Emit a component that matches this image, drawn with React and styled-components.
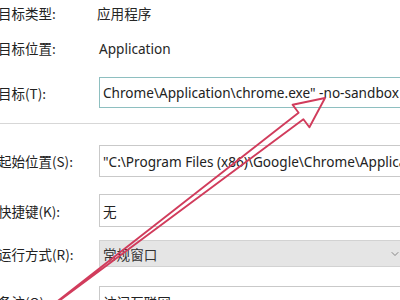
import styled, { createGlobalStyle } from 'styled-components';
import { ChevronDown } from 'lucide-react';

const GlobalStyle = createGlobalStyle`
  html, body {
    margin: 0;
    padding: 0;
    background: #ffffff;
    overflow: hidden;
  }
  body {
    font-family: "Noto Sans", "Noto Sans CJK SC", sans-serif;
    color: #262626;
  }
`;

const Page = styled.div`
  position: relative;
  width: 400px;
  height: 300px;
  overflow: hidden;
  background: #fff;
`;

const Row = styled.div`
  display: flex;
  align-items: center;
  height: ${(p) => p.$h}px;
  margin-top: ${(p) => p.$mt}px;
`;

const Label = styled.div`
  width: 101px;
  flex: none;
  margin-left: -2px;
  font-family: "Noto Sans CJK SC", sans-serif;
  font-size: 13.5px;
  white-space: nowrap;
  color: #222;
`;

const Value = styled.div`
  font-size: 13.6px;
  white-space: nowrap;
  font-family: "Noto Sans", "Noto Sans CJK SC", sans-serif;
  margin-left: ${(p) => p.$ml || 0}px;
`;

const Box = styled.div`
  flex: none;
  box-sizing: border-box;
  width: 330px;
  height: 100%;
  display: flex;
  align-items: center;
  padding-left: 3px;
  border: 1px solid ${(p) => (p.$focus ? '#8ebfc0' : '#c9c9c9')};
  background: #fff;
  font-size: 13.6px;
  white-space: nowrap;
  overflow: hidden;
  color: #222;
`;

const Combo = styled(Box)`
  width: 302px;
  justify-content: space-between;
  padding-right: 0;
  background: #e5e5e5;
  border-color: #d2d2d2;
  border-right: none;
  color: #333;
`;

const Separator = styled.div`
  height: 1px;
  margin-top: 15px;
  background: #d7d7d7;
`;

const Arrow = styled.svg`
  position: absolute;
  left: 0;
  top: 0;
  pointer-events: none;
`;

export default function App() {
  return (
    <Page>
      <GlobalStyle />
      <Row $h={26} $mt={0}>
        <Label>目标类型:</Label>
        <Value $ml={-2}>应用程序</Value>
      </Row>
      <Row $h={26} $mt={9}>
        <Label>目标位置:</Label>
        <Value $ml={0}>Application</Value>
      </Row>
      <Row $h={31} $mt={16}>
        <Label>目标(T):</Label>
        <Box $focus>Chrome\Application\chrome.exe" -no-sandbox</Box>
      </Row>
      <Separator />
      <Row $h={32} $mt={21}>
        <Label>起始位置(S):</Label>
        <Box>"C:\Program Files (x86)\Google\Chrome\Application"</Box>
      </Row>
      <Row $h={33} $mt={17}>
        <Label>快捷键(K):</Label>
        <Box>无</Box>
      </Row>
      <Row $h={27} $mt={13}>
        <Label>运行方式(R):</Label>
        <Combo>
          常规窗口
          <ChevronDown size={12} color="#666" strokeWidth={1.5} />
        </Combo>
      </Row>
      <Row $h={32} $mt={19}>
        <Label>备注(O):</Label>
        <Box>访问互联网</Box>
      </Row>
      <Arrow width="400" height="300" viewBox="0 0 400 300">
        <polygon
          points="325,98 309.4,127.2 303.4,119.2 36,318 298.6,112.8 292.6,104.8"
          fill="none"
          stroke="#d13c5c"
          strokeWidth="1.9"
          strokeLinejoin="round"
        />
      </Arrow>
    </Page>
  );
}
